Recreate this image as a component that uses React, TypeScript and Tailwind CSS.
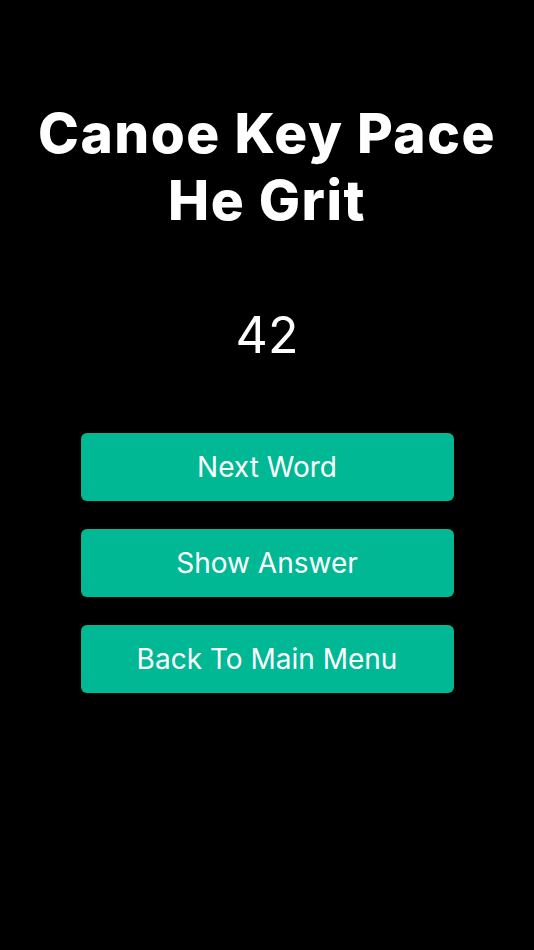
export default function App() {
  const buttons = ['Next Word', 'Show Answer', 'Back To Main Menu'];
  return (
    <div className="min-h-[950px] w-full bg-black flex flex-col items-center pt-[100px] font-['Inter',sans-serif]">
      <h1 className="text-white text-center font-extrabold text-[55px] leading-[67px] tracking-[1.5px]">
        Canoe Key Pace
        <br />
        He Grit
      </h1>
      <div className="mt-[76px] text-white text-[50px] leading-[50px] font-normal">42</div>
      <div className="mt-[73px] flex flex-col gap-[28px] w-[373px]">
        {buttons.map((label) => (
          <button
            key={label}
            className="h-[68px] w-full rounded-[6px] bg-[#00b894] text-white text-[28px] flex items-center justify-center"
          >
            {label}
          </button>
        ))}
      </div>
    </div>
  );
}
